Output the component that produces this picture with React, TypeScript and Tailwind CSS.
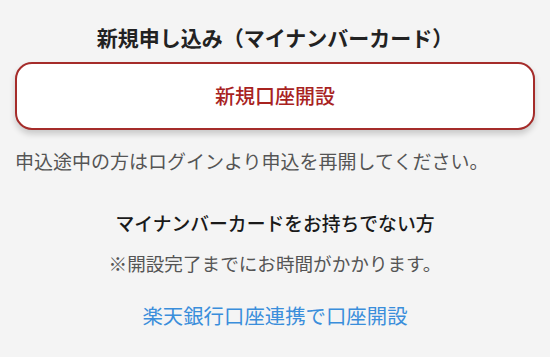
import React from "react";

export default function App() {
  const font = { fontFamily: '"Noto Sans CJK JP", "Noto Sans", sans-serif' };
  return (
    <div className="w-[550px] h-[357px] bg-[#f4f4f4] overflow-hidden flex flex-col items-center" style={font}>
      <div className="mt-[22px] h-[30px] leading-[30px] text-[21px] font-bold text-[#222]">
        新規申し込み（マイナンバーカード）
      </div>
      <div className="mt-[10px] w-[520px] h-[68px] rounded-[17px] border-2 border-[#a52c2a] bg-white shadow-[0_4px_6px_rgba(0,0,0,0.18)] flex items-center justify-center">
        <span className="text-[20px] text-[#a8231f] font-medium">新規口座開設</span>
      </div>
      <div className="mt-[17px] w-[520px] h-[28px] leading-[28px] text-[19px] text-[#555] whitespace-nowrap">
        申込途中の方はログインより申込を再開してください。
      </div>
      <div className="mt-[34px] h-[28px] leading-[28px] text-[18.8px] text-[#1a1a1a] font-medium">
        マイナンバーカードをお持ちでない方
      </div>
      <div className="mt-[12px] h-[28px] leading-[28px] text-[18.6px] text-[#555]">
        ※開設完了までにお時間がかかります。
      </div>
      <div className="mt-[23px] h-[30px] leading-[30px] text-[20.4px] text-[#3a8edb]">
        楽天銀行口座連携で口座開設
      </div>
    </div>
  );
}
